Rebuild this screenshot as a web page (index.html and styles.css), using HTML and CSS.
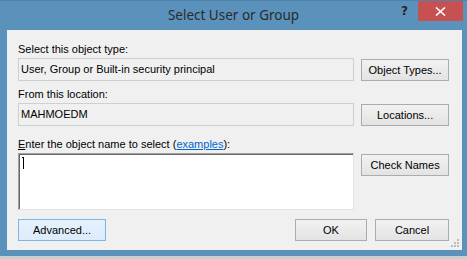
FILE: index.html
```html
<!DOCTYPE html>
<html>
<head>
<meta charset="utf-8">
<link rel="stylesheet" href="styles.css">
</head>
<body>
<div class="window">
  <div class="titlebar">
    <div class="spacer"></div>
    <div class="title">Select User or Group</div>
    <div class="controls">
      <span class="help">?</span>
      <span class="close"><svg width="11" height="9" viewBox="0 0 11 9"><path d="M1 0.5 L10 8.5 M10 0.5 L1 8.5" stroke="#fff" stroke-width="1.6"/></svg></span>
    </div>
  </div>
  <div class="client">
    <div class="label">Select this object type:</div>
    <div class="row">
      <div class="field">User, Group or Built-in security principal</div>
      <button class="btn side">Object Types...</button>
    </div>
    <div class="label second">From this location:</div>
    <div class="row">
      <div class="field">MAHMOEDM</div>
      <button class="btn side">Locations...</button>
    </div>
    <div class="label third"><u>E</u>nter the object name to select (<a class="link">examples</a>):</div>
    <div class="row">
      <div class="textarea"><span class="caret"></span></div>
      <button class="btn side check">Check Names</button>
    </div>
    <div class="footer">
      <button class="btn advanced">Advanced...</button>
      <div class="actions">
        <button class="btn ok">OK</button>
        <button class="btn cancel">Cancel</button>
      </div>
    </div>
    <svg class="grip" width="9" height="9" viewBox="0 0 9 9"><g fill="#bdbdbd"><rect x="6" y="0" width="2" height="2"/><rect x="3" y="3" width="2" height="2"/><rect x="6" y="3" width="2" height="2"/><rect x="0" y="6" width="2" height="2"/><rect x="3" y="6" width="2" height="2"/><rect x="6" y="6" width="2" height="2"/></g></svg>
  </div>
  <div class="taskstrip"></div>
</div>
</body>
</html>
```
FILE: styles.css
```css
* { box-sizing: border-box; }
html, body { margin: 0; padding: 0; }
body {
  width: 467px;
  height: 259px;
  overflow: hidden;
  background: #5a92bc;
  font-family: "Liberation Sans", Arial, sans-serif;
  font-size: 11px;
  color: #000;
}
.window {
  width: 467px;
  height: 259px;
  display: flex;
  flex-direction: column;
  background: #5a92bc;
  border-top: 1px solid #4d82ab;
}
.titlebar {
  height: 29px;
  display: grid;
  grid-template-columns: 1fr auto 1fr;
  align-items: start;
}
.title {
  font-family: "Noto Sans", "Open Sans", sans-serif;
  font-size: 13.5px;
  color: #2b2b2b;
  line-height: 20px;
  padding-top: 4px;
}
.controls {
  justify-self: end;
  display: flex;
  align-items: flex-start;
  margin-right: 4px;
}
.help {
  font-family: "DejaVu Sans", sans-serif;
  font-weight: bold;
  font-size: 12px;
  color: #262626;
  line-height: 14px;
  margin-top: 3px;
  margin-right: 10px;
}
.close {
  width: 45px;
  height: 20px;
  background: #c75050;
  display: flex;
  align-items: center;
  justify-content: center;
}
.client {
  position: relative;
  margin: 0 5px 0 7px;
  height: 220px;
  background: #f0f0f0;
  padding: 13px 13px 0 11px;
  display: flex;
  flex-direction: column;
}
.label {
  line-height: 13px;
  height: 13px;
  white-space: nowrap;
}
.label.second { margin-top: 7px; }
.label.third { margin-top: 12px; }
.link { color: #0066cc; text-decoration: underline; }
.row {
  display: flex;
  gap: 7px;
  margin-top: 2px;
  align-items: flex-start;
}
.field {
  width: 337px;
  height: 23px;
  border: 1px solid #cfcfcf;
  background: #f0f0f0;
  padding: 0 2px;
  line-height: 21px;
  white-space: nowrap;
}
.btn {
  font-family: "Liberation Sans", Arial, sans-serif;
  font-size: 11px;
  color: #000;
  height: 22px;
  border: 1px solid #acacac;
  background: linear-gradient(#f2f2f2, #e3e3e3);
  padding: 0;
  margin: 0;
  line-height: 20px;
  text-align: center;
}
.btn.side { width: 88px; margin-top: 1px; }
.textarea {
  width: 337px;
  height: 57px;
  background: #fff;
  border-top: 1px solid #a0a0a0;
  border-left: 1px solid #a0a0a0;
  border-right: 1px solid #e3e3e3;
  border-bottom: 1px solid #e3e3e3;
  box-shadow: inset 1px 1px 0 #696969;
  padding: 3px 0 0 3px;
}
.caret {
  display: block;
  width: 2px;
  height: 12px;
  border-right: 1px solid #000;
  border-top: 1px solid #000;
}
.footer {
  display: flex;
  justify-content: space-between;
  margin-top: 8px;
}
.advanced {
  width: 88px;
  border-color: #7eb4ea;
  background: linear-gradient(#e6f1fc, #dcecfc);
  margin-top: 1px;
}
.actions { display: flex; gap: 8px; margin-top: 1px; }
.ok { width: 72px; }
.cancel { width: 74px; }
.grip {
  position: absolute;
  right: 2px;
  bottom: 2px;
}
.taskstrip {
  margin-top: auto;
  height: 3px;
  background: #c9ced3;
}
```
